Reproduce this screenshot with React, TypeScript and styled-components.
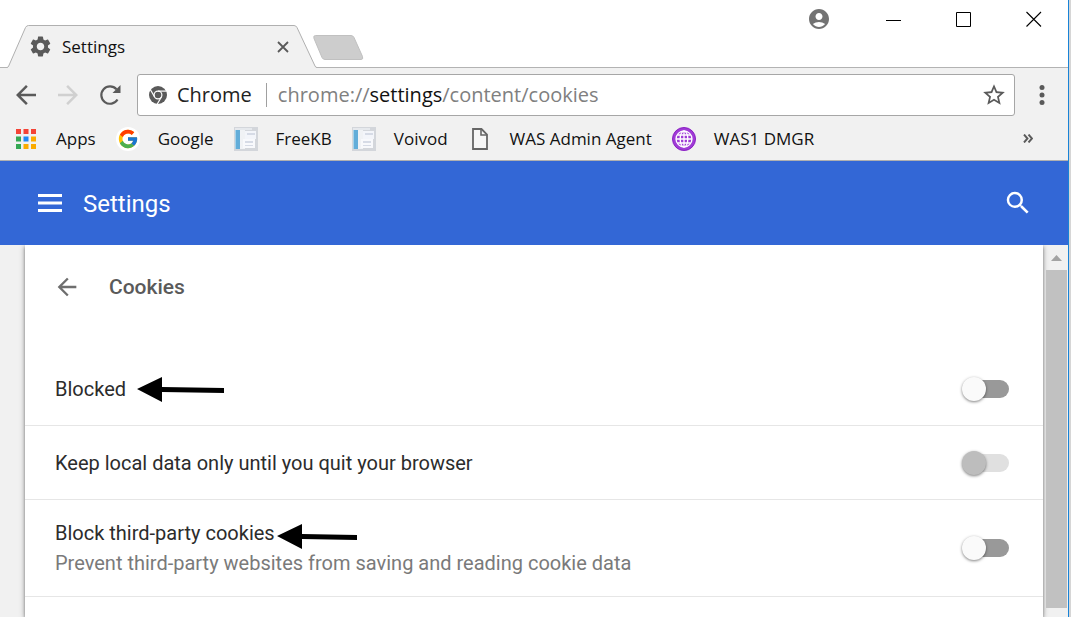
import React from "react";
import styled, { createGlobalStyle } from "styled-components";
import {
  MdAccountCircle,
  MdArrowBack,
  MdArrowForward,
  MdSearch,
  MdSettings,
  MdStarBorder,
} from "react-icons/md";
import { FcGoogle } from "react-icons/fc";

const GlobalStyle = createGlobalStyle`
  *, *::before, *::after { box-sizing: border-box; }
  body { margin: 0; background: #d6d6d6; }
  button, input { margin: 0; padding: 0; font: inherit; }
  svg { display: block; flex: none; }
`;

const uiFont = `"Open Sans", "Noto Sans", sans-serif`;

const Desktop = styled.div`
  display: flex;
  min-height: 100vh;
  padding-right: 2px;
`;

const BrowserWindow = styled.div`
  flex: 1;
  min-width: 0;
  display: flex;
  flex-direction: column;
  border-right: 1px solid #1883d7;
  background: #f1f1f1;
  color: #111;
  font-family: ${uiFont};
`;

const TabStrip = styled.header`
  display: flex;
  align-items: flex-end;
  height: 68px;
  padding-left: 7px;
  background: #fff;
  border-bottom: 1px solid #b3b3b3;
`;

const Tab = styled.div`
  position: relative;
  display: flex;
  align-items: center;
  gap: 9px;
  width: 310px;
  height: 43px;
  margin-bottom: -1px;
  padding: 0 26px 0 21px;
  font-size: 17px;
  line-height: 24px;
  > * { position: relative; }
`;

const TabShape = styled.svg`
  && {
    position: absolute;
    left: 0;
    top: 0;
  }
`;

const TabTitle = styled.span`
  flex: 1;
`;

const IconButton = styled.button<{ $w: number; $h?: number; $color?: string }>`
  display: flex;
  flex: none;
  align-items: center;
  justify-content: center;
  width: ${(p) => p.$w}px;
  height: ${(p) => p.$h ?? p.$w}px;
  border: 0;
  background: none;
  color: ${(p) => p.$color ?? "#5a5a5a"};
`;

const NewTab = styled.button`
  width: 52px;
  height: 27px;
  margin: 0 0 6px -5px;
  padding: 0;
  border: 0;
  background: none;
`;

const WindowControls = styled.div`
  display: flex;
  align-items: center;
  align-self: flex-start;
  gap: 54px;
  height: 37px;
  margin-left: auto;
  padding-right: 26px;
`;

const Toolbar = styled.div`
  display: flex;
  align-items: center;
  gap: 12px;
  height: 54px;
  padding: 0 11px;
`;

const NavButtons = styled.div`
  display: flex;
  gap: 12px;
`;

const AddressBar = styled.div`
  flex: 1;
  min-width: 0;
  display: flex;
  align-items: center;
  height: 42px;
  padding: 0 7px 0 11px;
  background: #fff;
  border: 1px solid #a6a6a6;
  border-radius: 3px;
  font-size: 20px;
  line-height: 28px;
`;

const SiteChip = styled.span`
  display: flex;
  align-items: center;
  gap: 10px;
  color: #222;
`;

const ChipDivider = styled.span`
  width: 1px;
  height: 24px;
  margin: 0 11px 0 14px;
  background: #a0a0a0;
`;

const Url = styled.div`
  flex: 1;
  min-width: 0;
  overflow: hidden;
  white-space: nowrap;
  color: #808080;
  outline: none;
`;

const Host = styled.span`
  color: #111;
`;

const Bookmarks = styled.nav`
  display: flex;
  align-items: center;
  gap: 20px;
  height: 39px;
  padding: 0 30px 5px 14px;
  border-bottom: 1px solid #b0b0b0;
  font-size: 17px;
  line-height: 24px;
`;

const Bookmark = styled.a`
  display: flex;
  align-items: center;
  gap: 18px;
  color: #111;
  text-decoration: none;
  white-space: nowrap;
`;

const BookmarkIcon = styled.span<{ $round?: boolean }>`
  display: flex;
  align-items: center;
  justify-content: center;
  width: 24px;
  height: 24px;
  border-radius: ${(p) => (p.$round ? "50%" : "0")};
  background: ${(p) => (p.$round ? "#fff" : "none")};
`;

const Spacer = styled.span`
  flex: 1;
`;

const SettingsHeader = styled.header`
  display: flex;
  align-items: center;
  height: 84px;
  padding: 0 35px 0 34px;
  background: #3367d6;
  color: #fff;
  font-family: Roboto, sans-serif;
`;

const SettingsTitle = styled.h1`
  flex: 1;
  margin: 0 0 0 17px;
  padding-top: 2px;
  font-size: 24px;
  line-height: 32px;
  font-weight: 400;
`;

const Content = styled.div`
  flex: 1;
  display: flex;
  overflow: hidden;
  padding-left: 25px;
  font-family: Roboto, sans-serif;
`;

const Card = styled.main`
  flex: 1;
  min-width: 0;
  background: #fff;
  box-shadow: 0 2px 3px rgba(0, 0, 0, 0.35), 0 1px 6px rgba(0, 0, 0, 0.3);
`;

const SubHeader = styled.div`
  display: flex;
  align-items: center;
  gap: 28px;
  height: 84px;
  margin-bottom: 23px;
  padding-left: 28px;
`;

const SubTitle = styled.h2`
  margin: 0;
  font-size: 21px;
  line-height: 28px;
  font-weight: 500;
  color: #5a5a5a;
`;

const Row = styled.div<{ $tall?: boolean }>`
  display: flex;
  align-items: center;
  justify-content: space-between;
  height: ${(p) => (p.$tall ? 97 : 74)}px;
  padding: 0 34px 0 30px;
  border-bottom: 1px solid #e6e6e6;
  font-size: 20px;
  line-height: 30px;
`;

const RowText = styled.div``;

const LabelLine = styled.div`
  position: relative;
  height: 30px;
`;

const Label = styled.label`
  color: #2c2c2c;
`;

const Hint = styled.div`
  color: #7a7a7a;
`;

const PointerArrow = styled.svg<{ $left: number; $top: number }>`
  position: absolute;
  left: ${(p) => p.$left}px;
  top: ${(p) => p.$top}px;
`;

const Switch = styled.input`
  appearance: none;
  position: relative;
  display: block;
  flex: none;
  width: 47px;
  height: 24px;
  &::before {
    content: "";
    position: absolute;
    inset: 3px 0 3px 5px;
    border-radius: 9px;
    background: #999;
  }
  &::after {
    content: "";
    position: absolute;
    left: 0;
    top: 0;
    width: 24px;
    height: 24px;
    border-radius: 50%;
    background: #fafafa;
    box-shadow: 0 1px 3px rgba(0, 0, 0, 0.5);
  }
  &:disabled::before { background: #e0e0e0; }
  &:disabled::after { background: #bdbdbd; }
`;

const ScrollTrack = styled.div`
  z-index: 1;
  display: flex;
  flex-direction: column;
  width: 25px;
  padding: 0 1px 9px 3px;
`;

const ScrollThumb = styled.div`
  flex: 1;
  background: #c1c1c1;
`;

const ReloadIcon = () => (
  <svg width="30" height="30" viewBox="0 0 30 30" aria-hidden="true">
    <path d="M22.500 19.500A8.700 8.700 0 1 1 21.500 9.200" fill="none" stroke="currentColor" strokeWidth="2.200" />
    <path d="M25.500 5V13H17.500Z" fill="currentColor" />
  </svg>
);

const ChromeMark = () => (
  <svg width="18" height="18" viewBox="0 0 18 18" aria-hidden="true">
    <circle cx="9" cy="9" r="9" fill="#5a5a5a" />
    <g fill="none" stroke="#fff" strokeWidth="1.2">
      <circle cx="9" cy="9" r="3.9" />
      <path d="M9 5.1H17.6" />
      <path d="M9 5.1H17.6" transform="rotate(120 9 9)" />
      <path d="M9 5.1H17.6" transform="rotate(240 9 9)" />
    </g>
  </svg>
);

const AppsGrid = () => {
  const colors = ["#f44336", "#f44336", "#f44336", "#34a853", "#1e88f5", "#fbab00", "#34a853", "#fbab00", "#fbab00"];
  return (
    <svg width="20" height="20" viewBox="0 0 20 20" aria-hidden="true">
      {colors.map((c, i) => (
        <rect key={i} x={(i % 3) * 7.5} y={Math.floor(i / 3) * 7.5} width="5" height="5" fill={c} />
      ))}
    </svg>
  );
};

const SitePreview = () => (
  <svg width="24" height="24" viewBox="0 0 24 24" aria-hidden="true">
    <rect width="24" height="24" fill="#d3d6db" />
    <rect x="1" y="1" width="17" height="2" fill="#e6e9ed" />
    <rect x="1" y="3" width="5" height="19" fill="#62add9" />
    <rect x="1" y="3" width="1" height="19" fill="#a5d2ea" />
    <rect x="6" y="3" width="5" height="19" fill="#f0f2f5" />
    <rect x="11" y="4" width="11" height="8" fill="#f3f5fa" />
    <rect x="13" y="6" width="8" height="2" fill="#d6dbe6" />
    <rect x="9" y="12" width="12" height="9" fill="#f8f9fc" />
    <rect x="11" y="14" width="8" height="2" fill="#d6dbe6" />
    <rect x="11" y="18" width="8" height="1" fill="#d6dbe6" />
  </svg>
);

const PageIcon = () => (
  <svg width="16" height="22" viewBox="0 0 16 22" aria-hidden="true">
    <path d="M1 1H9.5L15 6.5V21H1Z" fill="#f7f7f7" stroke="#666" strokeWidth="1.8" />
    <path d="M9 1V7H15" fill="none" stroke="#666" strokeWidth="1.6" />
  </svg>
);

const GlobeIcon = () => (
  <svg width="24" height="24" viewBox="0 0 24 24" aria-hidden="true">
    <circle cx="12" cy="12" r="11.5" fill="#a03bd6" stroke="#8a1fc4" />
    <g fill="none" stroke="#fff" strokeWidth="1.3">
      <circle cx="12" cy="12" r="8" />
      <ellipse cx="12" cy="12" rx="3.8" ry="8" />
      <path d="M12 4V20M4 12H20M5.3 8H18.7M5.3 16H18.7" />
    </g>
  </svg>
);

type PointerSpot = { length: number; left: number; top: number };

const Pointer = ({ length, left, top }: PointerSpot) => (
  <PointerArrow $left={left} $top={top} width={length} height="26" viewBox={`0 0 ${length} 26`} aria-hidden="true">
    <path d={`M0 12L25 0V10L${length} 11V16L25 15V25Z`} fill="#000" />
  </PointerArrow>
);

const bookmarks = [
  { name: "Apps", icon: <AppsGrid /> },
  { name: "Google", icon: <FcGoogle size={22} />, round: true },
  { name: "FreeKB", icon: <SitePreview /> },
  { name: "Voivod", icon: <SitePreview /> },
  { name: "WAS Admin Agent", icon: <PageIcon /> },
  { name: "WAS1 DMGR", icon: <GlobeIcon /> },
];

type Setting = { id: string; label: string; hint?: string; disabled?: boolean; pointer?: PointerSpot };

const settings: Setting[] = [
  { id: "blocked", label: "Blocked", pointer: { length: 87, left: 82, top: 3 } },
  { id: "keep", label: "Keep local data only until you quit your browser", disabled: true },
  {
    id: "third-party",
    label: "Block third-party cookies",
    hint: "Prevent third-party websites from saving and reading cookie data",
    pointer: { length: 80, left: 222, top: 6 },
  },
];

export default function App() {
  return (
    <Desktop>
      <GlobalStyle />
      <BrowserWindow>
        <TabStrip>
          <Tab>
            <TabShape width="310" height="43" viewBox="0 0 310 43" aria-hidden="true">
              <path
                d="M0 42.5Q1 42.5 1.700 41L18.500 2.500Q19.500 0.500 21.500 0.500H287Q289 0.500 290 2.500L308 41Q308.700 42.500 310 42.500V43H0Z"
                fill="#f1f1f1"
              />
              <path
                d="M0 42.5Q1 42.5 1.700 41L18.500 2.500Q19.500 0.500 21.500 0.500H287Q289 0.500 290 2.500L308 41Q308.700 42.500 310 42.500"
                fill="none"
                stroke="#b0b0b0"
              />
            </TabShape>
            <MdSettings size={25} color="#5a5a5a" />
            <TabTitle>Settings</TabTitle>
            <IconButton $w={16} aria-label="Close tab">
              <svg width="12" height="12" viewBox="0 0 12 12">
                <path d="M1 1L11 11M11 1L1 11" stroke="#5a5a5a" strokeWidth="1.8" />
              </svg>
            </IconButton>
          </Tab>
          <NewTab aria-label="New tab">
            <svg width="52" height="27" viewBox="0 0 52 27">
              <path
                d="M3.500 1.500H39Q41 1.500 42 3.500L50.500 22.500Q51.500 25.500 49 25.500H13Q11 25.500 10 23.500L2 4.500Q1 1.500 3.500 1.500Z"
                fill="#cdcdcd"
                stroke="#c0c0c0"
              />
            </svg>
          </NewTab>
          <WindowControls>
            <IconButton $w={26} $color="#737373" aria-label="Profile">
              <MdAccountCircle size={24} />
            </IconButton>
            <IconButton $w={16} aria-label="Minimize">
              <svg width="16" height="16" viewBox="0 0 16 16">
                <path d="M0 9.500H15" stroke="#000" />
              </svg>
            </IconButton>
            <IconButton $w={16} aria-label="Maximize">
              <svg width="16" height="16" viewBox="0 0 16 16">
                <path d="M0.500 1.500H14.500V15.500H0.500Z" fill="none" stroke="#000" />
              </svg>
            </IconButton>
            <IconButton $w={16} aria-label="Close">
              <svg width="16" height="16" viewBox="0 0 16 16">
                <path d="M0.500 1L15 15.500M15 1L0.500 15.500" stroke="#000" strokeWidth="1.1" />
              </svg>
            </IconButton>
          </WindowControls>
        </TabStrip>
        <Toolbar>
          <NavButtons>
            <IconButton $w={30} aria-label="Back">
              <MdArrowBack size={30} />
            </IconButton>
            <IconButton $w={30} $color="#d0d0d0" aria-label="Forward">
              <MdArrowForward size={30} />
            </IconButton>
            <IconButton $w={30} aria-label="Reload">
              <ReloadIcon />
            </IconButton>
          </NavButtons>
          <AddressBar>
            <SiteChip>
              <ChromeMark />
              Chrome
            </SiteChip>
            <ChipDivider />
            <Url role="textbox" aria-label="Address" contentEditable suppressContentEditableWarning spellCheck={false}>
              chrome://<Host>settings</Host>/content/cookies
            </Url>
            <IconButton $w={26} aria-label="Bookmark this page">
              <MdStarBorder size={26} />
            </IconButton>
          </AddressBar>
          <IconButton $w={30} aria-label="Menu">
            <svg width="6" height="20" viewBox="0 0 6 20">
              <g fill="#5a5a5a">
                <circle cx="3" cy="2.500" r="2.500" />
                <circle cx="3" cy="10" r="2.500" />
                <circle cx="3" cy="17.500" r="2.500" />
              </g>
            </svg>
          </IconButton>
        </Toolbar>
        <Bookmarks aria-label="Bookmarks">
          {bookmarks.map((b) => (
            <Bookmark key={b.name} href="#">
              <BookmarkIcon $round={b.round}>{b.icon}</BookmarkIcon>
              {b.name}
            </Bookmark>
          ))}
          <Spacer />
          <IconButton $w={20} aria-label="More bookmarks">
            <svg width="10" height="9" viewBox="0 0 10 9">
              <path d="M1 0.500L4.500 4.500L1 8.500M5.500 0.500L9 4.500L5.500 8.500" fill="none" stroke="#5a5a5a" strokeWidth="1.900" />
            </svg>
          </IconButton>
        </Bookmarks>
        <SettingsHeader>
          <IconButton $w={32} $color="#fff" aria-label="Main menu">
            <svg width="24" height="18" viewBox="0 0 24 18">
              <path d="M0 0H24V3H0ZM0 7.500H24V10.500H0ZM0 15H24V18H0Z" fill="currentColor" />
            </svg>
          </IconButton>
          <SettingsTitle>Settings</SettingsTitle>
          <IconButton $w={30} $color="#fff" aria-label="Search settings">
            <MdSearch size={30} />
          </IconButton>
        </SettingsHeader>
        <Content>
          <Card>
            <SubHeader>
              <IconButton $w={28} $color="#6e6e6e" aria-label="Go back">
                <MdArrowBack size={28} />
              </IconButton>
              <SubTitle>Cookies</SubTitle>
            </SubHeader>
            {settings.map((s) => (
              <Row key={s.id} $tall={!!s.hint}>
                <RowText>
                  <LabelLine>
                    <Label htmlFor={s.id}>{s.label}</Label>
                    {s.pointer && <Pointer {...s.pointer} />}
                  </LabelLine>
                  {s.hint && <Hint>{s.hint}</Hint>}
                </RowText>
                <Switch type="checkbox" role="switch" id={s.id} disabled={s.disabled} />
              </Row>
            ))}
          </Card>
          <ScrollTrack aria-hidden="true">
            <svg width="21" height="25" viewBox="0 0 21 25">
              <path d="M5 16L10.500 10L16 16Z" fill="#a3a3a3" />
            </svg>
            <ScrollThumb />
          </ScrollTrack>
        </Content>
      </BrowserWindow>
    </Desktop>
  );
}
